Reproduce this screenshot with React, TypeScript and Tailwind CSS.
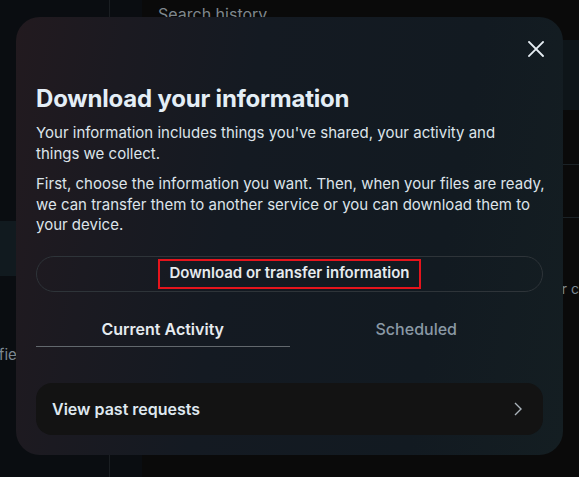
import React from "react";

export default function App() {
  return (
    <div
      className="relative w-[579px] h-[477px] overflow-hidden bg-[#08090c] flex"
      style={{ fontFamily: "Inter, 'Noto Sans', sans-serif" }}
    >
      {/* left sidebar */}
      <div className="w-[110px] h-full bg-[#0a0d11] border-r border-[#1a1e22] flex flex-col">
        <div className="h-[221px]" />
        <div className="h-[55px] bg-[#111a1f]" />
        <div className="mt-[68px] text-[15px] text-[#7d8891] -ml-[29px] whitespace-nowrap">Verified</div>
      </div>
      {/* narrow column */}
      <div className="w-[32px] h-full bg-[#0a0d11]" />
      {/* main content */}
      <div className="flex-1 h-full bg-[#0a0a0a] flex flex-col">
        <div className="pl-[16px] pt-[2px] text-[16px] text-[#7e878e] leading-[24px]">Search history</div>
        <div className="mt-[14px] h-[70px] bg-[#0e1519]" />
        <div className="h-[55px] border-b border-[#1b2226]" />
        <div className="h-[53px] border-b border-[#1b2226]" />
        <div className="mt-[60px] text-right pr-0 text-[14px] text-[#7d8891] whitespace-nowrap overflow-hidden">your c</div>
      </div>

      {/* modal */}
      <div className="absolute left-[16px] top-[17px] w-[547px] h-[438px] rounded-[24px] overflow-hidden bg-[linear-gradient(100deg,#221a1f_0%,#1b1a21_18%,#141a22_40%,#121a21_75%,#141e22_100%)] px-5 pt-[24px] pb-[20px] flex flex-col">
        <div className="flex justify-end h-[16px]">
          <svg width="16" height="16" viewBox="0 0 16 16" fill="none" stroke="#e6edf3" strokeWidth="1.8" strokeLinecap="square" className="translate-x-[1px]">
            <path d="M1 1 L15 15 M15 1 L1 15" />
          </svg>
        </div>
        <h1 className="mt-[27px] text-[24px] leading-[30px] font-bold text-[#e4eef6] tracking-[-0.2px]">
          Download your information
        </h1>
        <p className="mt-[9px] text-[15px] leading-[20.5px] text-[#dde4ea] whitespace-nowrap">
          Your information includes things you've shared, your activity and
          <br />
          things we collect.
        </p>
        <p className="mt-[10px] text-[15px] leading-[20.5px] text-[#dde4ea] whitespace-nowrap">
          First, choose the information you want. Then, when your files are ready,
          <br />
          we can transfer them to another service or you can download them to
          <br />
          your device.
        </p>
        <div className="mt-[20px] h-[36px] rounded-full border border-[#2e3439] flex items-center justify-center">
          <span className="border-2 border-[#e5141c] px-[9px] h-[30px] flex items-center text-[15px] font-semibold text-[#e6ebef]">
            Download or transfer information
          </span>
        </div>
        <div className="mt-[27px] flex">
          <div className="flex-1 text-center text-[16px] leading-[20px] font-semibold text-[#e6ebef] pb-[7px] border-b border-[#62686d]">
            Current Activity
          </div>
          <div className="flex-1 text-center text-[16px] leading-[20px] font-medium text-[#8a99a5] pb-[7px]">
            Scheduled
          </div>
        </div>
        <div className="mt-[36px] h-[52px] rounded-[16px] bg-[#131313] flex items-center justify-between pl-[16px] pr-[21px]">
          <span className="text-[16px] font-semibold text-[#dfe8ef]">View past requests</span>
          <svg width="8" height="14" viewBox="0 0 8 14" fill="none" stroke="#aab3ba" strokeWidth="1.4">
            <path d="M1 1 L7 7 L1 13" />
          </svg>
        </div>
      </div>
    </div>
  );
}
